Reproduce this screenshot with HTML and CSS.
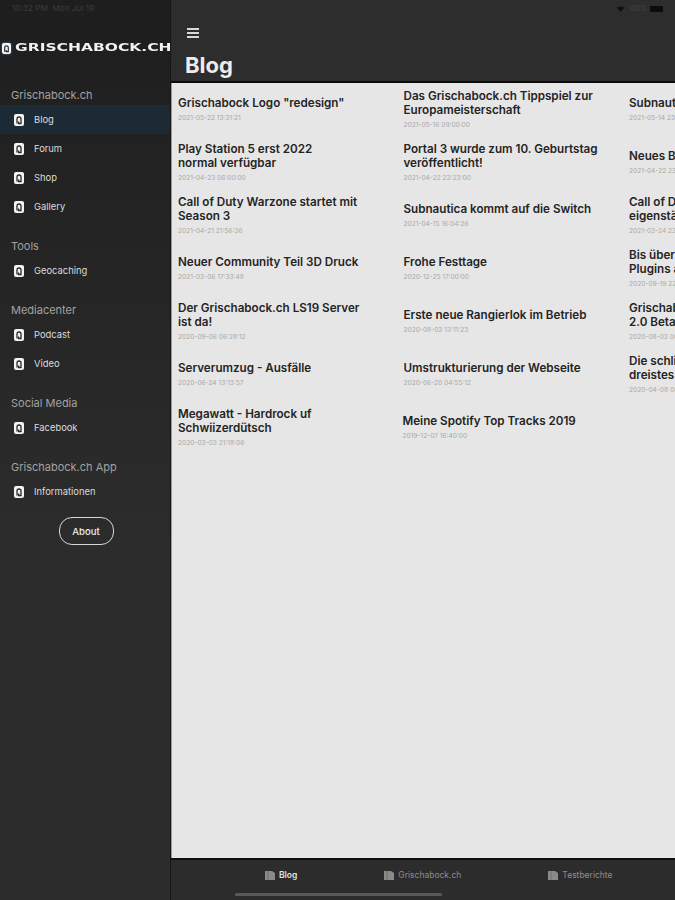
FILE: index.html
```html
<!DOCTYPE html>
<html lang="de">
<head>
<meta charset="utf-8">
<title>Blog</title>
<link rel="stylesheet" href="styles.css">
</head>
<body>
<svg class="defs" width="0" height="0" aria-hidden="true">
  <symbol id="glyph" viewBox="0 0 10 12">
    <rect x="0" y="0" width="10" height="12" rx="2" fill="#f4f4f4"/>
    <path d="M3 9.5V5a2 2 0 0 1 4 0v4.5H4.6V7.6" fill="none" stroke="#2a2a2a" stroke-width="1.3"/>
  </symbol>
  <symbol id="tabdoc" viewBox="0 0 12 11">
    <path d="M1 1h7l3 2v7H1z" fill="currentColor"/>
    <path d="M4 1v9" stroke="#2c2c2c" stroke-width=".6" opacity=".5"/>
  </symbol>
</svg>
<div class="app">
  <aside class="sidebar">
    <div class="status-left">10:32 PM&nbsp;&nbsp;Mon Jul 19</div>
    <div class="brand">
      <svg class="brand-icon"><use href="#glyph"/></svg>
      <span class="brand-text">GRISCHABOCK.CH</span>
    </div>
    <h2 class="group first">Grischabock.ch</h2>
    <a class="nav active"><svg class="nav-icon"><use href="#glyph"/></svg>Blog</a>
    <a class="nav"><svg class="nav-icon"><use href="#glyph"/></svg>Forum</a>
    <a class="nav"><svg class="nav-icon"><use href="#glyph"/></svg>Shop</a>
    <a class="nav"><svg class="nav-icon"><use href="#glyph"/></svg>Gallery</a>
    <h2 class="group">Tools</h2>
    <a class="nav"><svg class="nav-icon"><use href="#glyph"/></svg>Geocaching</a>
    <h2 class="group">Mediacenter</h2>
    <a class="nav"><svg class="nav-icon"><use href="#glyph"/></svg>Podcast</a>
    <a class="nav"><svg class="nav-icon"><use href="#glyph"/></svg>Video</a>
    <h2 class="group">Social Media</h2>
    <a class="nav"><svg class="nav-icon"><use href="#glyph"/></svg>Facebook</a>
    <h2 class="group">Grischabock.ch App</h2>
    <a class="nav"><svg class="nav-icon"><use href="#glyph"/></svg>Informationen</a>
    <div class="about-wrap"><button class="about">About</button></div>
  </aside>
  <main class="main">
    <header class="topbar">
      <div class="status-right">
        <svg class="wifi" viewBox="0 0 10 8"><path d="M0 2 5 8l5-6Q5-1 0 2z" fill="#111"/></svg>
        <span class="battery-text">100%</span>
        <span class="battery"></span>
      </div>
      <div class="burger"><i></i><i></i><i></i></div>
      <h1 class="page-title">Blog</h1>
    </header>
    <section class="content">
      <div class="posts">
        <article class="post"><h3>Grischabock Logo "redesign"</h3><time>2021-05-22 13:31:21</time></article>
        <article class="post"><h3>Das Grischabock.ch Tippspiel zur Europameisterschaft</h3><time>2021-05-16 09:00:00</time></article>
        <article class="post"><h3>Subnautica: Below Zero</h3><time>2021-05-14 23:10:00</time></article>

        <article class="post"><h3>Play Station 5 erst 2022 normal&nbsp;verfügbar</h3><time>2021-04-23 06:00:00</time></article>
        <article class="post"><h3>Portal 3 wurde zum 10. Geburtstag veröffentlicht!</h3><time>2021-04-22 23:23:00</time></article>
        <article class="post"><h3>Neues Bild</h3><time>2021-04-22 23:10:00</time></article>

        <article class="post"><h3>Call of Duty Warzone startet mit Season 3</h3><time>2021-04-21 21:56:36</time></article>
        <article class="post"><h3>Subnautica kommt auf die Switch</h3><time>2021-04-15 16:04:26</time></article>
        <article class="post"><h3>Call of Duty Warzone bleibt eigenständig</h3><time>2021-03-24 23:10:00</time></article>

        <article class="post"><h3>Neuer Community Teil 3D Druck</h3><time>2021-03-06 17:33:48</time></article>
        <article class="post"><h3>Frohe Festtage</h3><time>2020-12-25 17:00:00</time></article>
        <article class="post"><h3>Bis über tausend neue Mods und Plugins auf</h3><time>2020-09-19 22:10:00</time></article>

        <article class="post"><h3>Der Grischabock.ch LS19 Server ist&nbsp;da!</h3><time>2020-09-06 06:28:12</time></article>
        <article class="post"><h3>Erste neue Rangierlok im Betrieb</h3><time>2020-08-03 13:11:23</time></article>
        <article class="post"><h3>Grischabock.ch App Version 2.0&nbsp;Beta</h3><time>2020-08-03 00:10:00</time></article>

        <article class="post"><h3>Serverumzug - Ausfälle</h3><time>2020-06-24 13:13:57</time></article>
        <article class="post"><h3>Umstrukturierung der Webseite</h3><time>2020-06-20 04:55:12</time></article>
        <article class="post"><h3>Die schlimmste Sicherheitslücke dreistes Beispiel</h3><time>2020-04-08 08:10:00</time></article>

        <article class="post"><h3>Megawatt - Hardrock uf Schwiizerdütsch</h3><time>2020-03-03 21:18:06</time></article>
        <article class="post shifted"><h3>Meine Spotify Top Tracks 2019</h3><time>2019-12-07 16:40:00</time></article>
      </div>
    </section>
    <nav class="tabs">
      <a class="tab selected"><svg class="tab-icon"><use href="#tabdoc"/></svg>Blog</a>
      <a class="tab"><svg class="tab-icon"><use href="#tabdoc"/></svg>Grischabock.ch</a>
      <a class="tab"><svg class="tab-icon"><use href="#tabdoc"/></svg>Testberichte</a>
    </nav>
  </main>
</div>
<div class="home-bar"></div>
</body>
</html>
```
FILE: styles.css
```css
* { box-sizing: border-box; }
html, body { margin: 0; height: 100%; overflow: hidden; }
body { font-family: Inter, "Liberation Sans", sans-serif; background: #2c2c2c; position: relative; }
.defs { position: absolute; }
.app { display: flex; width: 675px; height: 900px; }

.sidebar {
  width: 171px; flex: none; height: 900px; overflow: hidden;
  background: linear-gradient(#1e1e1e, #2c2c2c 60%);
  border-right: 1px solid #161616;
  padding-top: 4px;
}
.status-left { height: 11px; font-size: 8.2px; line-height: 8px; color: #3c3c3c; padding-left: 12px; white-space: nowrap; }
.brand { display: flex; align-items: center; height: 12px; margin-top: 27px; padding-left: 2px; white-space: nowrap; }
.brand-icon { width: 9px; height: 11px; flex: none; margin-right: 4px; filter: drop-shadow(0 0 1px #3f78b5); }
.brand-text {
  display: block; flex: none; transform: scaleX(1.55); transform-origin: left center;
  font-family: "DejaVu Sans", sans-serif; font-weight: 700; font-size: 10px; line-height: 12px;
  color: #f2f2f2;
}
.group { margin: 0; font-size: 11px; font-weight: 400; line-height: 16px; color: #a2a2a2; padding: 17px 0 2px 11px; }
.group.first { padding-top: 33px; }
.nav { display: flex; align-items: center; height: 29px; padding-left: 14px; font-size: 9.4px; color: #dcdcdc; }
.nav.active { background: #1c2a35; }
.nav-icon { width: 10px; height: 12px; margin-right: 10px; flex: none; }
.about-wrap { display: flex; justify-content: center; padding: 11px 0 0 2px; }
.about {
  width: 55px; height: 28px; padding: 0; background: transparent; color: #ececec;
  border: 1.5px solid #d8d8d8; border-radius: 13px; font: 500 9.6px Inter, "Liberation Sans", sans-serif;
}

.main { flex: 1; min-width: 0; display: flex; flex-direction: column; height: 900px; }
.topbar { height: 83px; flex: none; background: #2d2d2d; border-bottom: 2px solid #0b0b0b; padding: 4px 0 0 16px; }
.status-right { display: flex; justify-content: flex-end; align-items: center; gap: 3px; height: 9px; padding-right: 12px; }
.wifi { width: 9px; height: 6px; }
.battery-text { font-size: 7px; color: #444; }
.battery { width: 13px; height: 6px; background: #0c0c0c; border-radius: 1px; }
.burger { display: flex; flex-direction: column; gap: 2px; width: 12px; margin-top: 15px; }
.burger i { display: block; height: 2px; background: #d8d8d8; }
.page-title { margin: 14px 0 0 -2px; font-size: 22px; line-height: 27px; font-weight: 700; color: #ececec; }

.content { flex: 1; min-height: 0; background: #e6e6e6; border-left: 1px solid #9a9a9a; overflow: hidden; padding-top: 1px; }
.posts { display: grid; grid-template-columns: repeat(3, 225.5px); grid-auto-rows: 53px; padding-left: 6px; width: 720px; }
.post { display: flex; flex-direction: column; justify-content: center; min-width: 0; padding: 0 26px 1px 0; }
.post.shifted { margin-left: -1px; }
.post h3 { margin: 0; font-size: 11.65px; line-height: 13.5px; font-weight: 600; color: #242424; }
.post time { display: block; margin-top: 3.5px; font-size: 6.6px; line-height: 9px; color: #a8a8a8; white-space: nowrap; }

.tabs { height: 42px; flex: none; background: #2c2c2c; border-top: 2px solid #101010; display: flex; gap: 86px; padding-left: 93px; }
.tab { display: flex; align-items: center; gap: 3px; height: 30px; font-size: 8.5px; color: #8c8c8c; white-space: nowrap; }
.tab.selected { color: #e4e4e4; font-weight: 600; }
.tab-icon { width: 12px; height: 11px; color: #8a8a8a; }

.home-bar { position: absolute; left: 235px; bottom: 4px; width: 207px; height: 3px; border-radius: 2px; background: #5a5a5a; }
```
